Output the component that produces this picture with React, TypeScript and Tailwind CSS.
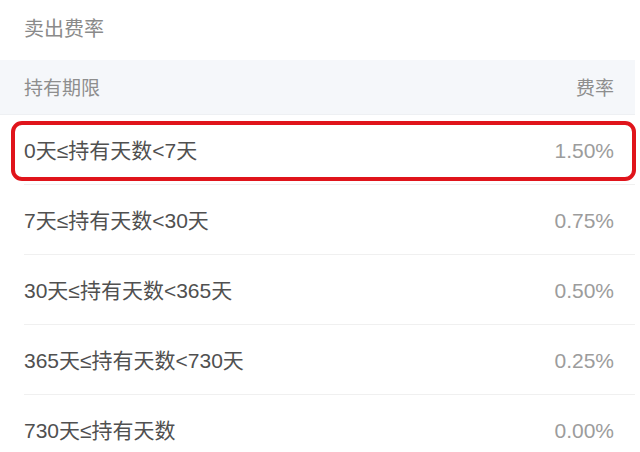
import React from "react";

const rows = [
  { label: "0天≤持有天数<7天", rate: "1.50%", hl: true },
  { label: "7天≤持有天数<30天", rate: "0.75%" },
  { label: "30天≤持有天数<365天", rate: "0.50%" },
  { label: "365天≤持有天数<730天", rate: "0.25%" },
  { label: "730天≤持有天数", rate: "0.00%" },
];

export default function App() {
  return (
    <div
      className="w-[640px] h-[452px] overflow-hidden bg-white"
      style={{ fontFamily: '"Liberation Sans", "Noto Sans CJK SC", sans-serif' }}
    >
      <div className="w-[635px]">
        <div className="h-[60px] flex items-center pb-[2px] pl-6 text-[20px] text-[#8a8a8a]">卖出费率</div>
        <div className="h-[55px] flex items-center justify-between pt-[5px] pl-6 pr-[21px] bg-[#f5f7fa] text-[19px] text-[#8e8e8e] border-b border-[#eef0f3]">
          <span>持有期限</span>
          <span>费率</span>
        </div>
        {rows.map((r, i) => (
          <div key={i} className="relative h-[70px] pl-6">
            <div
              className={
                "h-full flex items-center justify-between pt-[2px] pr-[21px] " +
                (i < rows.length - 1 ? "border-b border-[#f0f0f0]" : "")
              }
            >
              <span className="text-[21px] text-[#505050]">{r.label}</span>
              <span className="text-[21px] text-[#9c9c9c]">{r.rate}</span>
            </div>
            {r.hl && (
              <div className="absolute left-[11px] top-[6px] w-[625px] h-[60px] rounded-[11px] border-4 border-[#e0141b]" />
            )}
          </div>
        ))}
      </div>
    </div>
  );
}
